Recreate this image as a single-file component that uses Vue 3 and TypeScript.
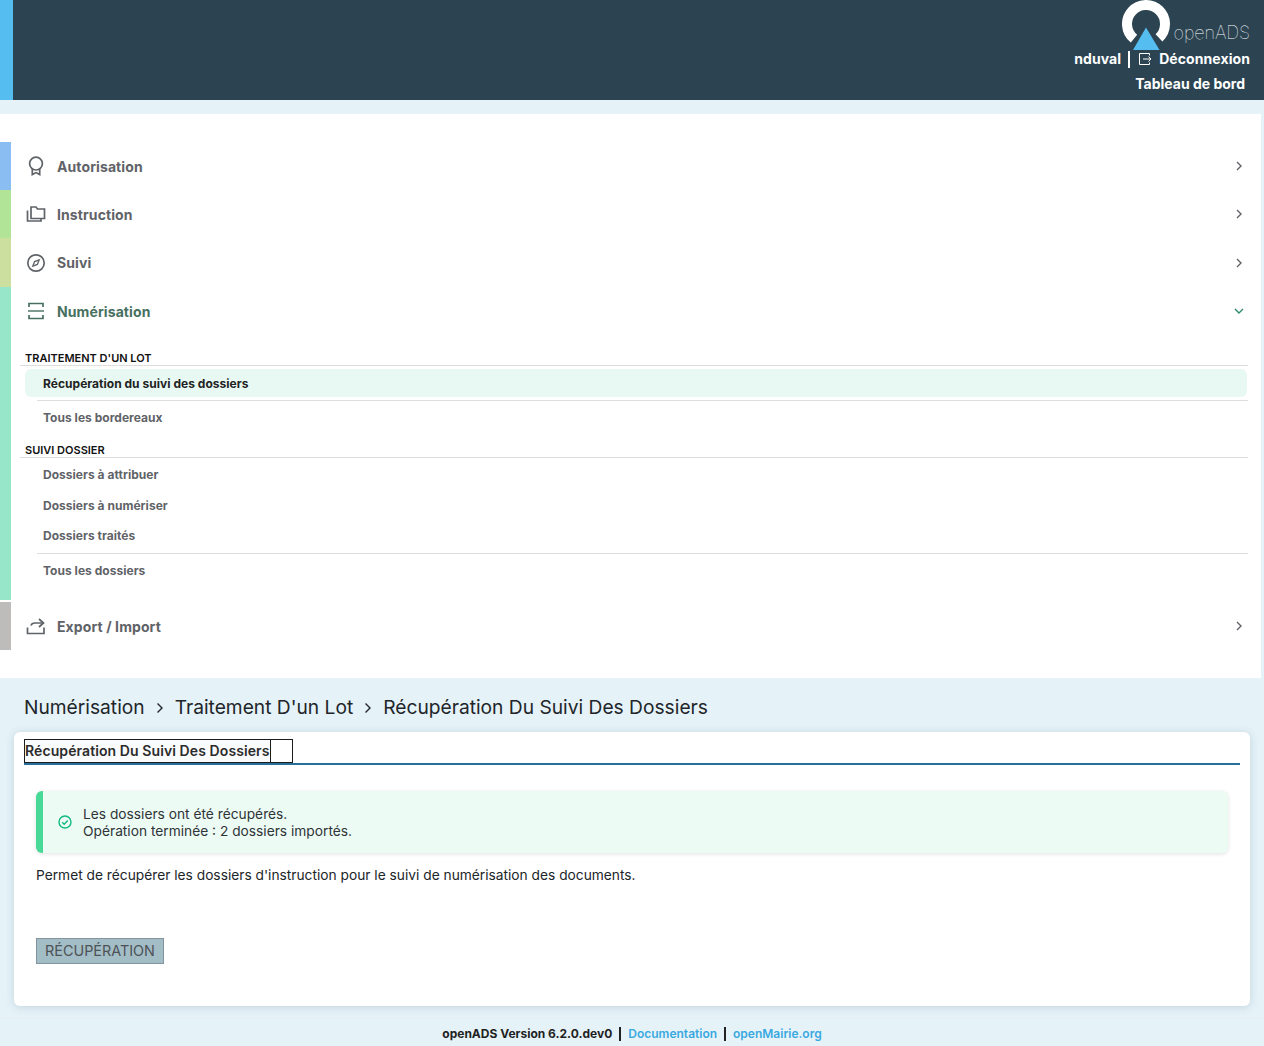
<script setup lang="ts">
const crumbs = ['Numérisation', "Traitement D'un Lot", 'Récupération Du Suivi Des Dossiers']
</script>

<template>
  <div class="page">
    <header class="top">
      <div class="top-right">
        <div class="logo">
          <svg width="48" height="50" viewBox="0 0 48 50">
            <path d="M12 38.73 A19 19 0 1 1 37 37.86" fill="none" stroke="#fff" stroke-width="10" />
            <path d="M24 27.5 L37.5 50 L11 50 Z" fill="#56bdf0" />
          </svg>
          <span class="logo-text">openADS</span>
        </div>
        <div class="user-row">
          <span>nduval</span>
          <span class="bar"></span>
          <svg class="out" width="14" height="14" viewBox="0 0 14 14" fill="none" stroke="#fff" stroke-width="1">
            <path d="M11.5 3.5V1.5H1.5V12.5H11.5V10.5" />
            <path d="M5 7H13M10.5 4.5L13 7L10.5 9.5" />
          </svg>
          <span>Déconnexion</span>
        </div>
        <div class="board">Tableau de bord</div>
      </div>
    </header>

    <nav class="menu">
      <div class="sec sec-blue">
        <svg class="ic" width="20" height="20" viewBox="0 0 20 20" fill="none" stroke="#5f6368" stroke-width="1.7">
          <circle cx="10" cy="7.6" r="6.4" />
          <path d="M6.3 13V18.6L10 16.6L13.7 18.6V13" />
        </svg>
        <span class="label">Autorisation</span>
        <svg class="chev" width="8" height="10" viewBox="0 0 8 10" fill="none" stroke="#5f6368" stroke-width="1.4"><path d="M2 1L6 5L2 9" /></svg>
      </div>
      <div class="sec sec-green">
        <svg class="ic" width="20" height="20" viewBox="0 0 20 20" fill="none" stroke="#5f6368" stroke-width="1.7">
          <path d="M1.5 6.5V17H15V14.5" />
          <path d="M5 14.5V3H10L11.5 5H18.5V14.5Z" />
        </svg>
        <span class="label">Instruction</span>
        <svg class="chev" width="8" height="10" viewBox="0 0 8 10" fill="none" stroke="#5f6368" stroke-width="1.4"><path d="M2 1L6 5L2 9" /></svg>
      </div>
      <div class="sec sec-olive">
        <svg class="ic" width="20" height="20" viewBox="0 0 20 20" fill="none" stroke="#5f6368" stroke-width="1.7">
          <circle cx="10" cy="10" r="8.2" />
          <path d="M13.2 6.8L11.4 11.4L6.8 13.2L8.6 8.6Z" stroke-width="1.3" />
        </svg>
        <span class="label">Suivi</span>
        <svg class="chev" width="8" height="10" viewBox="0 0 8 10" fill="none" stroke="#5f6368" stroke-width="1.4"><path d="M2 1L6 5L2 9" /></svg>
      </div>

      <div class="open-block">
        <div class="sec sec-open">
          <svg class="ic" width="20" height="20" viewBox="0 0 20 20" fill="none" stroke="#47705f" stroke-width="1.7">
            <path d="M3 6V2.5H17V6" />
            <path d="M2 10H18" stroke-width="1.4" />
            <path d="M3 14V17.5H17V14" />
          </svg>
          <span class="label label-open">Numérisation</span>
          <svg class="chev" width="10" height="8" viewBox="0 0 10 8" fill="none" stroke="#2e8b6b" stroke-width="1.4"><path d="M1 2L5 6L9 2" /></svg>
        </div>

        <div class="group">
          <div class="group-title first">TRAITEMENT D'UN LOT</div>
          <div class="item active">Récupération du suivi des dossiers</div>
          <div class="sep"></div>
          <div class="item item-after">Tous les bordereaux</div>
          <div class="group-title second">SUIVI DOSSIER</div>
          <div class="item tight first-tight">Dossiers à attribuer</div>
          <div class="item tight">Dossiers à numériser</div>
          <div class="item tight">Dossiers traités</div>
          <div class="sep sep-b"></div>
          <div class="item item-last">Tous les dossiers</div>
        </div>
      </div>

      <div class="sec sec-grey">
        <svg class="ic" width="20" height="20" viewBox="0 0 20 20" fill="none" stroke="#5f6368" stroke-width="1.7">
          <path d="M1.5 11.5V17.5H18V11.5" />
          <path d="M5 9.5C5.5 7.8 7 7 9 7H17.5" />
          <path d="M13 3L17.5 7L13 11" />
        </svg>
        <span class="label">Export / Import</span>
        <svg class="chev" width="8" height="10" viewBox="0 0 8 10" fill="none" stroke="#5f6368" stroke-width="1.4"><path d="M2 1L6 5L2 9" /></svg>
      </div>
    </nav>

    <div class="crumbs">
      <template v-for="(c, i) in crumbs" :key="c">
        <span>{{ c }}</span>
        <svg v-if="i < crumbs.length - 1" class="crumb-sep" width="8" height="12" viewBox="0 0 8 12" fill="none" stroke="#212529" stroke-width="1.4"><path d="M1.5 1.5L6 6L1.5 10.5" /></svg>
      </template>
    </div>

    <main class="card">
      <div class="tabs">
        <div class="tab">Récupération Du Suivi Des Dossiers</div>
        <div class="tab-empty"></div>
      </div>
      <div class="alert">
        <svg class="alert-ic" width="14" height="14" viewBox="0 0 14 14" fill="none" stroke="#10b981" stroke-width="1.4">
          <circle cx="7" cy="7" r="6" />
          <path d="M4.2 7.2L6.2 9.2L9.8 5.4" />
        </svg>
        <div class="alert-text">Les dossiers ont été récupérés.<br />Opération terminée : 2 dossiers importés.</div>
      </div>
      <p class="desc">Permet de récupérer les dossiers d'instruction pour le suivi de numérisation des documents.</p>
      <button class="btn" type="button">RÉCUPÉRATION</button>
    </main>

    <footer class="foot">
      <span class="ver">openADS Version 6.2.0.dev0</span>
      <span class="fbar"></span>
      <span class="flink">Documentation</span>
      <span class="fbar"></span>
      <span class="flink">openMairie.org</span>
    </footer>
  </div>
</template>

<style>
html, body { margin: 0; background: #e5f2f8; }
</style>

<style scoped>
.page {
  width: 1264px;
  height: 1046px;
  overflow: hidden;
  background: #e5f2f8;
  font-family: Inter, "Liberation Sans", sans-serif;
  color: #212529;
}
.top {
  box-sizing: border-box;
  height: 100px;
  background: #2c4452;
  border-left: 13px solid #56bdf0;
  display: flex;
  justify-content: flex-end;
}
.top-right {
  display: flex;
  flex-direction: column;
  align-items: flex-end;
  padding-right: 14px;
  color: #fff;
  font-weight: 700;
  font-size: 14px;
}
.logo { display: flex; align-items: flex-start; height: 50px; }
.logo svg { display: block; }
.logo-text {
  font-weight: 100;
  font-size: 18px;
  line-height: 24px;
  margin-top: 21px;
  margin-left: 4px;
  letter-spacing: -0.1px;
  color: #fff;
}
.user-row { display: flex; align-items: center; height: 18px; line-height: 18px; letter-spacing: 0.08px; }
.bar { width: 2px; height: 17px; background: #fff; margin: 0 8px 0 7px; }
.out { margin-right: 7px; }
.board { margin-top: 7px; line-height: 18px; padding-right: 5px; }

.menu {
  box-sizing: border-box;
  width: 1261px;
  height: 564px;
  margin-top: 14px;
  padding-top: 28px;
  background: #fff;
}
.sec {
  box-sizing: border-box;
  height: 48px;
  display: flex;
  align-items: center;
  border-left: 11px solid;
  padding-left: 15px;
  padding-right: 18px;
}
.sec-blue { border-color: #8abdf2; }
.sec-green { border-color: #b2e497; }
.sec-olive { border-color: #cddf9f; height: 49px; }
.sec-grey { border-color: #bdbcba; margin-top: 2px; }
.sec-open { border: 0; padding-left: 15px; padding-right: 17px; }
.open-block {
  box-sizing: border-box;
  height: 313px;
  border-left: 11px solid #97e6ca;
}
.ic { flex: none; }
.label {
  margin-left: 11px;
  font-size: 14px;
  font-weight: 700;
  letter-spacing: 0.1px;
  color: #5f6368;
  flex: 1;
}
.label-open { color: #47705f; }
.chev { flex: none; }

.group { font-size: 12px; font-weight: 700; }
.group-title {
  box-sizing: border-box;
  margin-left: 9px;
  margin-right: 13px;
  padding-left: 5px;
  font-size: 11px;
  font-weight: 600;
  color: #111;
  line-height: 15px;
  height: 15px;
  border-bottom: 1px solid #dedede;
}
.group-title.first { margin-top: 16px; }
.group-title.second { margin-top: 11px; }
.item {
  box-sizing: border-box;
  height: 28px;
  line-height: 28px;
  margin-left: 14px;
  margin-right: 14px;
  padding-left: 18px;
  letter-spacing: 0.03px;
  color: #5f6368;
}
.active {
  margin-top: 3px;
  line-height: 29px;
  background: #e8f9f3;
  border-radius: 6px;
  color: #222;
}
.sep { height: 1px; background: #dedede; margin: 3px 13px 0 26px; }
.item-after { margin-top: 3px; }
.tight { height: 30.5px; line-height: 30.5px; margin-top: 0; }
.first-tight { margin-top: 2px; }
.sep-b { margin-top: 1px; }
.item-last { margin-top: 3px; }

.crumbs {
  display: flex;
  align-items: center;
  padding-left: 24px;
  margin-top: 16px;
  height: 26px;
  font-size: 19.2px;
  line-height: 26px;
}
.crumb-sep { margin: 2px 11px 0 11px; }

.card {
  box-sizing: border-box;
  margin: 12px 14px 0;
  height: 274px;
  background: #fff;
  border-radius: 6px;
  box-shadow: 0 1px 8px rgba(60, 90, 110, 0.2);
  padding: 7px 10px 0;
}
.tabs {
  display: flex;
  height: 24px;
  border-bottom: 2px solid #26719b;
}
.tab, .tab-empty {
  box-sizing: border-box;
  height: 24px;
  border: 1px solid #1d1d1d;
}
.tab {
  padding: 0;
  font-size: 14px;
  font-weight: 600;
  letter-spacing: 0.09px;
  line-height: 22px;
  color: #2b2b2b;
  background: #fafbfd;
}
.tab-empty { width: 23px; margin-left: -1px; }
.alert {
  box-sizing: border-box;
  margin: 26px 12px 0;
  height: 62px;
  display: flex;
  align-items: center;
  background: #edfbf5;
  border-left: 7px solid #48d997;
  border-radius: 6px;
  box-shadow: 0 1px 4px rgba(0, 0, 0, 0.12);
  padding-left: 15px;
}
.alert-ic { flex: none; }
.alert-text {
  margin-left: 11px;
  padding-top: 2px;
  font-size: 13.76px;
  line-height: 17px;
  color: #2f3437;
}
.desc {
  margin: 14px 12px 0;
  font-size: 13.76px;
  line-height: 17px;
  color: #212529;
}
.btn {
  display: block;
  box-sizing: border-box;
  margin: 54px 0 0 12px;
  width: 128px;
  height: 26px;
  padding: 0 0 1px;
  background: #a3bdc6;
  border: 1px solid #83949f;
  border-radius: 0;
  font-family: Inter, "Liberation Sans", sans-serif;
  font-size: 14.4px;
  color: #4d5256;
  text-align: center;
}
.foot {
  box-sizing: border-box;
  margin-top: 12px;
  border-top: 1px solid #e8eef0;
  height: 28px;
  padding-top: 2px;
  display: flex;
  justify-content: center;
  align-items: center;
  font-size: 12px;
  font-weight: 600;
}
.ver { color: #1f1f1f; font-weight: 700; }
.fbar { width: 2px; height: 14px; background: #222; margin: 0 7px; }
.flink { color: #3aa9e0; }
</style>
